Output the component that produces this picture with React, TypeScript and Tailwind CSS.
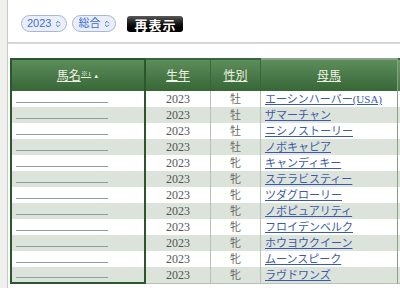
import { ChevronsUpDown } from 'lucide-react';

const rows = [
  { sex: '牡', dam: 'エーシンハーバー(USA)' },
  { sex: '牡', dam: 'ザマーチャン' },
  { sex: '牡', dam: 'ニシノストーリー' },
  { sex: '牡', dam: 'ノボキャピア' },
  { sex: '牝', dam: 'キャンディキー' },
  { sex: '牝', dam: 'ステラビスティー' },
  { sex: '牝', dam: 'ツダグローリー' },
  { sex: '牝', dam: 'ノボピュアリティ' },
  { sex: '牝', dam: 'フロイデンベルク' },
  { sex: '牝', dam: 'ホウヨウクイーン' },
  { sex: '牝', dam: 'ムーンスピーク' },
  { sex: '牝', dam: 'ラヴドワンズ' },
];

const Pill = ({ label }: { label: string }) => (
  <div className="flex items-center gap-[3px] h-[17px] pl-[5px] pr-[4px] rounded-full border border-[#a9b6cf] bg-[#e9eef8] text-[#3d6fd6] text-[11px] font-['Liberation_Sans','Noto_Sans_CJK_JP',sans-serif]">
    <span>{label}</span>
    <ChevronsUpDown size={8} strokeWidth={3} />
  </div>
);

const App = () => {
  return (
    <div className="flex w-[400px] h-[288px] overflow-hidden bg-white">
      <div className="w-[8px] shrink-0 bg-[#efefeb] border-r border-[#c9c9c4]" />
      <div className="flex-1 flex flex-col min-w-0">
        <div className="flex items-start h-[34px] pl-[13px] pt-[15px]">
          <Pill label="2023" />
          <div className="w-[5px]" />
          <Pill label="総合" />
          <button className="ml-[11px] mt-[1px] h-[16px] w-[56px] rounded-[3px] bg-gradient-to-b from-[#5a5a5a] via-[#141414] to-[#000] text-white font-bold text-[13px] leading-none tracking-[1px] font-['Noto_Sans_CJK_JP',sans-serif]">
            再表示
          </button>
        </div>
        <div className="h-[8px]" />
        <div className="border-t-2 border-[#d6d6d6]" />
        <div className="mt-[14px] ml-[2px] overflow-hidden">
          <table className="border-separate border-spacing-0 table-fixed w-[430px] text-[11px] font-['Liberation_Serif','Noto_Sans_CJK_JP',serif]">
            <colgroup>
              <col className="w-[136px]" />
              <col className="w-[65px]" />
              <col className="w-[50px]" />
              <col className="w-[137px]" />
              <col className="w-[42px]" />
            </colgroup>
            <thead>
              <tr className="text-[12px] text-[#eef3e6]">
                <th className="h-[33px] p-0 font-normal border-2 border-b-0 border-[#2c572c] bg-gradient-to-b from-[#5d8d5b] to-[#376737]">
                  <span className="underline">馬名</span>
                  <sup className="text-[7px] underline">※1</sup>
                  <span className="text-[6px] ml-[2px] align-middle">▲</span>
                </th>
                <th className="h-[33px] p-0 font-normal border-t-2 border-r border-[#3a653a] bg-gradient-to-b from-[#5d8d5b] to-[#376737]">
                  <span className="underline">生年</span>
                </th>
                <th className="h-[33px] p-0 font-normal border-t-2 border-r border-[#3a653a] bg-gradient-to-b from-[#5d8d5b] to-[#376737]">
                  <span className="underline">性別</span>
                </th>
                <th className="h-[33px] p-0 font-normal border-t-2 border-r border-[#8aa088] bg-gradient-to-b from-[#5d8d5b] to-[#376737]">
                  <span className="underline">母馬</span>
                </th>
                <th className="h-[33px] p-0 font-normal border-t-2 border-[#3a653a] bg-gradient-to-b from-[#6e9a6c] to-[#4b784b]" />
              </tr>
            </thead>
            <tbody>
              {rows.map((row, i) => {
                const bg = i % 2 === 0 ? 'bg-white' : 'bg-[#dce3da]';
                const last = i === rows.length - 1;
                return (
                  <tr key={row.dam} className={bg}>
                    <td className={`h-[16px] p-0 border-x-2 border-[#2c572c] ${last ? 'border-b-2' : ''}`}>
                      <div className="ml-[4px] mt-[6px] w-[92px] border-b border-[#8f9ea2]" />
                    </td>
                    <td className={`h-[16px] p-0 text-center text-[12px] text-[#555] leading-[16px] border-r border-[#b5c2b3] ${last ? 'border-b border-b-[#b5c2b3]' : ''}`}>
                      2023
                    </td>
                    <td className={`h-[16px] p-0 text-center text-[#6a6a6a] leading-[16px] border-r border-[#b5c2b3] ${last ? 'border-b border-b-[#b5c2b3]' : ''}`}>
                      {row.sex}
                    </td>
                    <td className={`h-[16px] p-0 pl-[4px] leading-[16px] border-r border-[#8aa088] ${last ? 'border-b border-b-[#b5c2b3]' : ''}`}>
                      <a className="text-[#3b5aa8] underline" href="#">{row.dam}</a>
                    </td>
                    <td className={`h-[16px] p-0 ${last ? 'border-b border-[#b5c2b3]' : ''}`} />
                  </tr>
                );
              })}
            </tbody>
          </table>
        </div>
      </div>
    </div>
  );
};

export default App;
